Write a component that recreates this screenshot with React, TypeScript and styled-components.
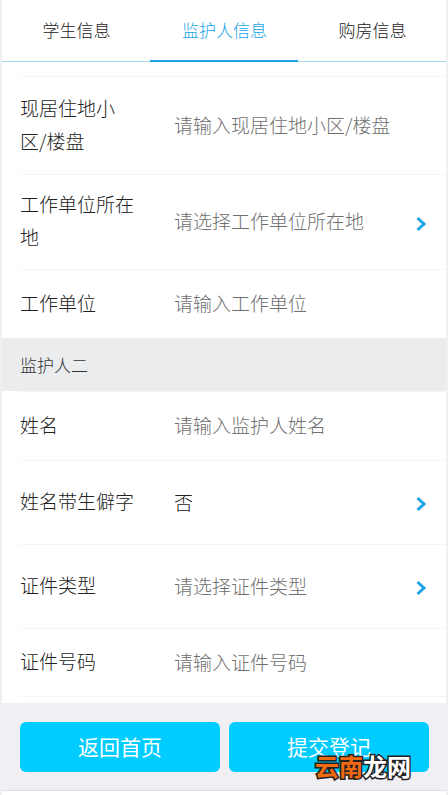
import styled, { createGlobalStyle } from 'styled-components';

const GlobalStyle = createGlobalStyle`
  html, body {
    margin: 0;
    padding: 0;
    background: #f0f0f0;
  }
  body {
    font-family: "Noto Sans CJK SC", "Liberation Sans", sans-serif;
    font-weight: 300;
  }
`;

const Page = styled.div`
  position: relative;
  width: 444px;
  height: 795px;
  margin-left: 2px;
  overflow: hidden;
  display: flex;
  flex-direction: column;
  background: #fff;
`;

const Tabs = styled.div`
  display: flex;
  height: 61px;
  flex-shrink: 0;
  border-bottom: 1px solid #a6d8ee;
`;

const Tab = styled.div<{ $active?: boolean }>`
  flex: 1;
  display: flex;
  align-items: center;
  justify-content: center;
  box-sizing: border-box;
  padding: 0 0 2px 1px;
  font-size: 17px;
  color: ${(p) => (p.$active ? '#1ba5e6' : '#222')};
  border-bottom: 2px solid ${(p) => (p.$active ? '#1ba5e6' : 'transparent')};
  margin-bottom: -1px;
`;

const Form = styled.div`
  flex: 1;
  padding-top: 14px;
`;

const Row = styled.div<{ $height: number }>`
  display: flex;
  align-items: center;
  height: ${(p) => p.$height}px;
  box-sizing: border-box;
  margin-left: 18px;
  border-top: 1px solid #f5f5f5;
`;

const Label = styled.div`
  width: 118px;
  margin: 0 36px 4px 0;
  flex-shrink: 0;
  font-size: 19px;
  line-height: 33px;
  color: #222;
`;

const Value = styled.div<{ $filled?: boolean }>`
  flex: 1;
  margin-bottom: 3px;
  font-size: 19px;
  line-height: 33px;
  color: ${(p) => (p.$filled ? '#222' : '#6f6f6f')};
`;

const Arrow = styled.svg`
  width: 12px;
  height: 16px;
  margin: 3px 19px 0 0;
  flex-shrink: 0;
  fill: none;
  stroke: #1ba5e6;
  stroke-width: 3;
`;

const SectionTitle = styled.div`
  height: 53px;
  display: flex;
  align-items: center;
  padding-left: 18px;
  background: #ebecee;
  font-size: 17px;
  color: #333;
`;

const Footer = styled.div`
  height: 88px;
  flex-shrink: 0;
  margin-bottom: 4px;
  box-sizing: border-box;
  padding: 19px 17px 18px 18px;
  display: flex;
  gap: 9px;
  background: #efeff4;
  border-bottom: 1px solid #ddd;
`;

const FooterButton = styled.button`
  flex: 1;
  border: none;
  border-radius: 6px;
  background: #00ccff;
  color: #fff;
  font-family: inherit;
  font-weight: 400;
  font-size: 21px;
  padding: 0 0 2px 0;
`;

const Watermark = styled.div`
  position: absolute;
  left: 313px;
  top: 750px;
  font-size: 24px;
  line-height: 32px;
  font-weight: 700;
  color: #fff;
  -webkit-text-stroke: 3px #222;
  paint-order: stroke fill;
`;

const WatermarkAccent = styled.span`
  color: #f26a10;
`;

interface FieldProps {
  label: string;
  value: string;
  height: number;
  filled?: boolean;
  arrow?: boolean;
}

const Field = ({ label, value, height, filled, arrow }: FieldProps) => (
  <Row $height={height}>
    <Label>{label}</Label>
    <Value $filled={filled}>{value}</Value>
    {arrow && (
      <Arrow viewBox="0 0 12 16">
        <path d="M2.5 2 L9 8 L2.5 14" />
      </Arrow>
    )}
  </Row>
);

const App = () => (
  <>
    <GlobalStyle />
    <Page>
      <Tabs>
        <Tab>学生信息</Tab>
        <Tab $active>监护人信息</Tab>
        <Tab>购房信息</Tab>
      </Tabs>
      <Form>
        <Field label="现居住地小区/楼盘" value="请输入现居住地小区/楼盘" height={98} />
        <Field label="工作单位所在地" value="请选择工作单位所在地" height={95} arrow />
        <Field label="工作单位" value="请输入工作单位" height={69} />
        <SectionTitle>监护人二</SectionTitle>
        <Field label="姓名" value="请输入监护人姓名" height={69} />
        <Field label="姓名带生僻字" value="否" height={84} filled arrow />
        <Field label="证件类型" value="请选择证件类型" height={84} arrow />
        <Field label="证件号码" value="请输入证件号码" height={68} />
        <Row $height={7} />
      </Form>
      <Footer>
        <FooterButton>返回首页</FooterButton>
        <FooterButton>提交登记</FooterButton>
      </Footer>
      <Watermark>
        <WatermarkAccent>云南</WatermarkAccent>龙网
      </Watermark>
    </Page>
  </>
);

export default App;
